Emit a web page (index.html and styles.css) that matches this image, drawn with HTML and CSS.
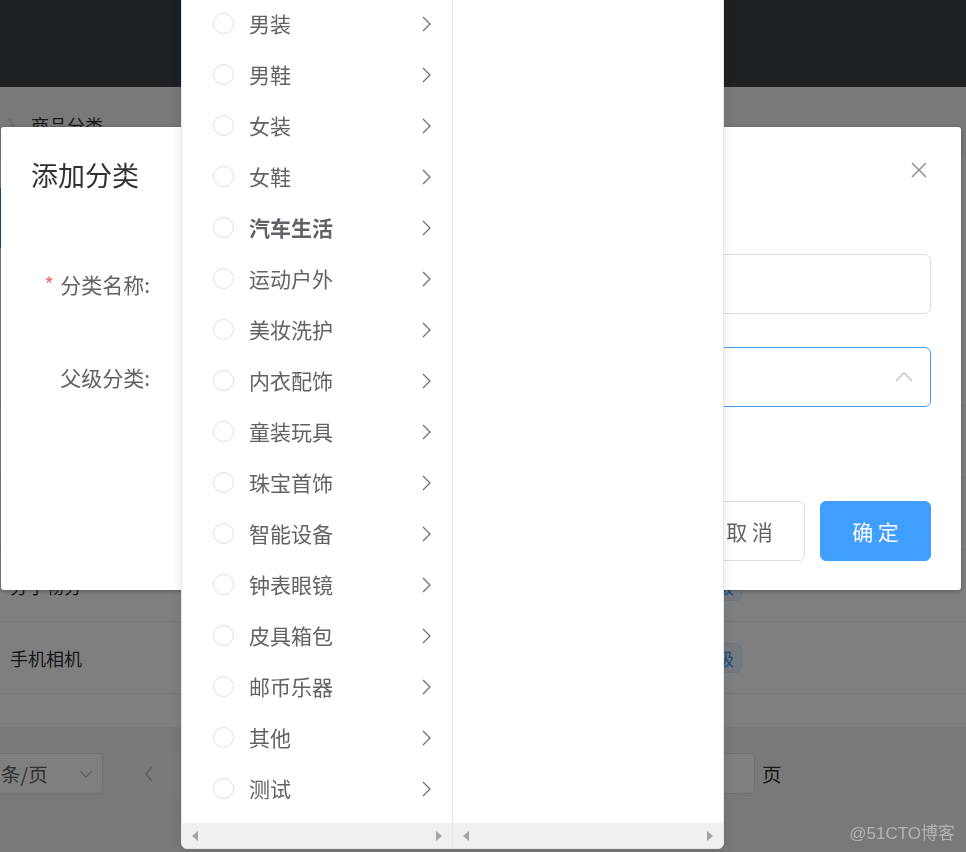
FILE: index.html
```html
<!DOCTYPE html>
<html lang="zh-CN">
<head>
<meta charset="utf-8">
<title>添加分类</title>
<link rel="stylesheet" href="styles.css">
</head>
<body>
<div class="page">
  <div class="header"></div>
  <div class="crumb"><span class="crumb-sep">〉</span><span class="crumb-text">商品分类</span></div>
  <div class="card">
    <div class="toolbar"><span class="add-btn"></span></div>
    <div class="table">
      <div class="row"><span class="cell-name">大家电</span><span class="tag">一级</span></div>
      <div class="row"><span class="cell-name">热门推荐</span><span class="tag">一级</span></div>
      <div class="row"><span class="cell-name">海外购</span><span class="tag">一级</span></div>
      <div class="row"><span class="cell-name">分子物分</span><span class="tag">二级</span></div>
      <div class="row"><span class="cell-name">手机相机</span><span class="tag">二级</span></div>
    </div>
  </div>
  <div class="pager">
    <div class="pager-size"><span>条/页</span>
      <svg class="pager-caret" width="14" height="10" viewBox="0 0 14 10"><polyline points="1,2 7,8 13,2" fill="none" stroke="#c0c4cc" stroke-width="1.3"/></svg>
    </div>
    <div class="pager-prev"><svg width="10" height="16" viewBox="0 0 10 16"><polyline points="8,1 2,8 8,15" fill="none" stroke="#c0c4cc" stroke-width="1.8"/></svg></div>
    <div class="pager-input"></div>
    <span class="pager-text">页</span>
  </div>
</div>

<div class="mask"></div>

<div class="dialog">
  <div class="dialog-header">
    <span class="dialog-title">添加分类</span>
    <svg class="dialog-close" width="24" height="24" viewBox="0 0 24 24"><path d="M5 5 L19 19 M19 5 L5 19" stroke="#909399" stroke-width="1.6" fill="none"/></svg>
  </div>
  <div class="dialog-body">
    <div class="form-item">
      <label class="form-label"><span class="req">*</span>分类名称:</label>
      <div class="input"></div>
    </div>
    <div class="form-item">
      <label class="form-label">父级分类:</label>
      <div class="input input-focus">
        <svg class="input-arrow" width="18" height="10" viewBox="0 0 18 10"><polyline points="1,9 9,1 17,9" fill="none" stroke="#c0c4cc" stroke-width="1.5"/></svg>
      </div>
    </div>
  </div>
  <div class="dialog-footer">
    <button class="btn">取 消</button>
    <button class="btn btn-primary">确 定</button>
  </div>
</div>

<div class="cascader">
  <div class="menu menu-first">
    <ul class="menu-list">
      <li class="node"><span class="radio"></span><span class="node-label">男装</span><svg class="node-arrow" width="18" height="18" viewBox="0 0 18 18"><polyline points="4,2 11,9 4,16" fill="none" stroke="#707276" stroke-width="1.3"/></svg></li>
      <li class="node"><span class="radio"></span><span class="node-label">男鞋</span><svg class="node-arrow" width="18" height="18" viewBox="0 0 18 18"><polyline points="4,2 11,9 4,16" fill="none" stroke="#707276" stroke-width="1.3"/></svg></li>
      <li class="node"><span class="radio"></span><span class="node-label">女装</span><svg class="node-arrow" width="18" height="18" viewBox="0 0 18 18"><polyline points="4,2 11,9 4,16" fill="none" stroke="#707276" stroke-width="1.3"/></svg></li>
      <li class="node"><span class="radio"></span><span class="node-label">女鞋</span><svg class="node-arrow" width="18" height="18" viewBox="0 0 18 18"><polyline points="4,2 11,9 4,16" fill="none" stroke="#707276" stroke-width="1.3"/></svg></li>
      <li class="node node-hover"><span class="radio"></span><span class="node-label">汽车生活</span><svg class="node-arrow" width="18" height="18" viewBox="0 0 18 18"><polyline points="4,2 11,9 4,16" fill="none" stroke="#707276" stroke-width="1.3"/></svg></li>
      <li class="node"><span class="radio"></span><span class="node-label">运动户外</span><svg class="node-arrow" width="18" height="18" viewBox="0 0 18 18"><polyline points="4,2 11,9 4,16" fill="none" stroke="#707276" stroke-width="1.3"/></svg></li>
      <li class="node"><span class="radio"></span><span class="node-label">美妆洗护</span><svg class="node-arrow" width="18" height="18" viewBox="0 0 18 18"><polyline points="4,2 11,9 4,16" fill="none" stroke="#707276" stroke-width="1.3"/></svg></li>
      <li class="node"><span class="radio"></span><span class="node-label">内衣配饰</span><svg class="node-arrow" width="18" height="18" viewBox="0 0 18 18"><polyline points="4,2 11,9 4,16" fill="none" stroke="#707276" stroke-width="1.3"/></svg></li>
      <li class="node"><span class="radio"></span><span class="node-label">童装玩具</span><svg class="node-arrow" width="18" height="18" viewBox="0 0 18 18"><polyline points="4,2 11,9 4,16" fill="none" stroke="#707276" stroke-width="1.3"/></svg></li>
      <li class="node"><span class="radio"></span><span class="node-label">珠宝首饰</span><svg class="node-arrow" width="18" height="18" viewBox="0 0 18 18"><polyline points="4,2 11,9 4,16" fill="none" stroke="#707276" stroke-width="1.3"/></svg></li>
      <li class="node"><span class="radio"></span><span class="node-label">智能设备</span><svg class="node-arrow" width="18" height="18" viewBox="0 0 18 18"><polyline points="4,2 11,9 4,16" fill="none" stroke="#707276" stroke-width="1.3"/></svg></li>
      <li class="node"><span class="radio"></span><span class="node-label">钟表眼镜</span><svg class="node-arrow" width="18" height="18" viewBox="0 0 18 18"><polyline points="4,2 11,9 4,16" fill="none" stroke="#707276" stroke-width="1.3"/></svg></li>
      <li class="node"><span class="radio"></span><span class="node-label">皮具箱包</span><svg class="node-arrow" width="18" height="18" viewBox="0 0 18 18"><polyline points="4,2 11,9 4,16" fill="none" stroke="#707276" stroke-width="1.3"/></svg></li>
      <li class="node"><span class="radio"></span><span class="node-label">邮币乐器</span><svg class="node-arrow" width="18" height="18" viewBox="0 0 18 18"><polyline points="4,2 11,9 4,16" fill="none" stroke="#707276" stroke-width="1.3"/></svg></li>
      <li class="node"><span class="radio"></span><span class="node-label">其他</span><svg class="node-arrow" width="18" height="18" viewBox="0 0 18 18"><polyline points="4,2 11,9 4,16" fill="none" stroke="#707276" stroke-width="1.3"/></svg></li>
      <li class="node"><span class="radio"></span><span class="node-label">测试</span><svg class="node-arrow" width="18" height="18" viewBox="0 0 18 18"><polyline points="4,2 11,9 4,16" fill="none" stroke="#707276" stroke-width="1.3"/></svg></li>
    </ul>
    <div class="hscroll"><span class="tri tri-left"></span><span class="tri tri-right"></span></div>
  </div>
  <div class="menu">
    <ul class="menu-list"></ul>
    <div class="hscroll"><span class="tri tri-left"></span><span class="tri tri-right"></span></div>
  </div>
</div>

<div class="watermark">@51CTO博客</div>
</body>
</html>
```

FILE: styles.css
```css
* { box-sizing: border-box; }

html, body {
  margin: 0;
  padding: 0;
}

body {
  width: 966px;
  height: 852px;
  overflow: hidden;
  background: #f2f3f5;
  font-family: "Noto Sans CJK SC", "Noto Sans", sans-serif;
  position: relative;
}

/* ---------- background page ---------- */
.page {
  width: 966px;
}

.header {
  height: 87px;
  background: #3c4248;
}

.crumb {
  height: 71px;
  padding: 26px 0 0 8px;
  display: flex;
  align-items: flex-start;
  line-height: 24px;
  font-size: 18px;
  color: #303133;
}

.crumb-sep {
  color: #c0c4cc;
  font-size: 16px;
  width: 23px;
}

.crumb-text {
  color: #303133;
}

.card {
  background: #fff;
  height: 569px;
  padding-top: 30px;
}

.toolbar {
  height: 60px;
}

.add-btn {
  display: block;
  width: 2px;
  height: 60px;
  background: #409eff;
}

.table {
  margin-top: 86px;
}

.row {
  height: 72px;
  border-bottom: 1px solid #ebeef5;
  display: flex;
  align-items: center;
  padding-left: 10px;
  font-size: 18px;
  color: #303133;
}

.cell-name {
  width: 680px;
}

.tag {
  height: 30px;
  width: 52px;
  border: 1px solid #d9ecff;
  background: #ecf5ff;
  color: #409eff;
  border-radius: 6px;
  font-size: 18px;
  line-height: 28px;
  text-align: center;
}

.pager {
  margin-top: 26px;
  height: 41px;
  display: flex;
  align-items: center;
  font-size: 19.5px;
  color: #606266;
}

.pager-size {
  margin-left: -20px;
  width: 123px;
  height: 41px;
  border: 1px solid #dcdfe6;
  border-radius: 5px;
  background: #fff;
  display: flex;
  align-items: center;
  padding-left: 20px;
  padding-right: 9px;
  justify-content: space-between;
}

.pager-prev {
  margin-left: 24px;
  width: 80px;
  height: 42px;
  background: #f4f4f5;
  border-radius: 3px;
  display: flex;
  align-items: center;
  padding-left: 17px;
}

.pager-input {
  margin-left: 478px;
  width: 70px;
  height: 41px;
  border: 1px solid #dcdfe6;
  border-radius: 5px;
  background: #fff;
}

.pager-text {
  margin-left: 7px;
  color: #303133;
}

/* ---------- modal mask ---------- */
.mask {
  position: fixed;
  inset: 0;
  background: rgba(0, 0, 0, 0.5);
}

/* ---------- dialog ---------- */
.dialog {
  position: absolute;
  left: 1px;
  top: 127px;
  width: 960px;
  background: #fff;
  border-radius: 3px;
  box-shadow: 0 1px 4px rgba(0, 0, 0, 0.3);
}

.dialog-header {
  position: relative;
  padding: 30px 30px 16px;
}

.dialog-title {
  display: block;
  font-size: 27px;
  line-height: 36px;
  color: #303133;
}

.dialog-close {
  position: absolute;
  top: 31px;
  right: 30px;
}

.dialog-body {
  padding: 45px 30px 46px;
}

.form-item {
  display: flex;
  align-items: center;
  margin-bottom: 33px;
}

.form-label {
  width: 160px;
  padding-right: 41px;
  text-align: right;
  font-size: 21px;
  line-height: 60px;
  color: #606266;
}

.req {
  color: #f56c6c;
  margin-right: 6px;
}

.input {
  flex: 1;
  height: 60px;
  border: 1px solid #dcdfe6;
  border-radius: 6px;
  display: flex;
  align-items: center;
  justify-content: flex-end;
}

.input-focus {
  border-color: #409eff;
}

.input-arrow {
  margin-right: 17px;
}

.dialog-footer {
  padding: 15px 30px 29px;
  display: flex;
  justify-content: flex-end;
  gap: 15px;
}

.btn {
  width: 111px;
  height: 60px;
  border: 1px solid #dcdfe6;
  border-radius: 6px;
  background: #fff;
  color: #606266;
  font-family: "Noto Sans CJK SC", sans-serif;
  font-size: 21px;
  padding: 0;
}

.btn-primary {
  background: #409eff;
  border-color: #409eff;
  color: #fff;
}

/* ---------- cascader dropdown ---------- */
.cascader {
  position: absolute;
  left: 181px;
  top: -12px;
  height: 861px;
  display: flex;
  background: #fff;
  border: 1px solid #e4e7ed;
  border-radius: 6px;
  box-shadow: 0 2px 12px 0 rgba(0, 0, 0, 0.1);
  overflow: hidden;
}

.menu {
  width: 270px;
  display: flex;
  flex-direction: column;
}

.menu-first {
  width: 271px;
  border-right: 1px solid #e4e7ed;
}

.menu-list {
  flex: 1;
  list-style: none;
  margin: 0;
  padding: 9px 0;
}

.node {
  height: 51px;
  display: flex;
  align-items: center;
  padding: 0 15px 0 31px;
  color: #606266;
  font-size: 21px;
}

.node-hover .node-label {
  font-weight: 700;
}

.radio {
  width: 21px;
  height: 21px;
  border: 1px solid #dcdfe6;
  border-radius: 50%;
  flex: none;
}

.node-label {
  flex: 1;
  padding: 0 15px;
  line-height: 51px;
}

.node-arrow {
  flex: none;
}

.hscroll {
  height: 25px;
  background: #f0f0f0;
  display: flex;
  align-items: center;
  justify-content: space-between;
  padding: 0 10px;
}

.tri {
  width: 0;
  height: 0;
  border-top: 5px solid transparent;
  border-bottom: 5px solid transparent;
}

.tri-left {
  border-right: 6px solid #a3a3a3;
}

.tri-right {
  border-left: 6px solid #a3a3a3;
}

/* ---------- watermark ---------- */
.watermark {
  position: absolute;
  right: 11px;
  bottom: 8px;
  font-family: "Liberation Sans", "Noto Sans CJK SC", sans-serif;
  font-size: 17px;
  color: #b3b3b4;
}
```
